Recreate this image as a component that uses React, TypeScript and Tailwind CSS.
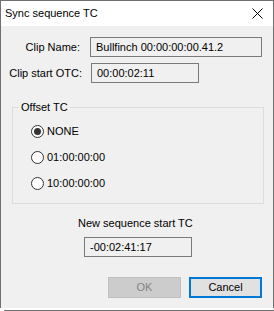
import React, { useState } from 'react';

const font = { fontFamily: '"Liberation Sans", Arial, sans-serif' };

const Radio: React.FC<{ label: string; checked: boolean; onClick: () => void }> = ({ label, checked, onClick }) => (
  <div className="h-[26px] flex items-center cursor-default" onClick={onClick}>
    <span className="w-[13px] h-[13px] rounded-full border border-[#333333] bg-white flex items-center justify-center">
      {checked && <span className="w-[7px] h-[7px] rounded-full bg-[#333333]"></span>}
    </span>
    <span className="ml-[3px] text-[11px] text-black">{label}</span>
  </div>
);

const App: React.FC = () => {
  const [offset, setOffset] = useState('NONE');
  const offsets = ['NONE', '01:00:00:00', '10:00:00:00'];

  return (
    <div className="w-[274px] h-[311px] bg-white flex flex-col" style={font}>
      <div className="h-[308px] border-l border-r border-t border-[#6f6f6f] flex flex-col">
        {/* title bar */}
        <div className="h-[25px] bg-white flex items-center justify-between">
          <span className="ml-[4px] text-[11px] text-black">Sync sequence TC</span>
          <svg width="11" height="11" viewBox="0 0 11 11" className="mr-[10px]">
            <path d="M0.5 0.5 L10.5 10.5 M10.5 0.5 L0.5 10.5" stroke="#000" strokeWidth="1" fill="none" />
          </svg>
        </div>

        {/* body */}
        <div className="flex-1 bg-[#f0f0f0] flex flex-col text-[11px] text-black">
          <div className="mt-[11px] flex items-center">
            <span className="w-[79px] text-right">Clip Name:</span>
            <div className="ml-[10px] w-[172px] h-[20px] border border-[#7a7a7a] flex items-center pl-[5px]">
              Bullfinch 00:00:00:00.41.2
            </div>
          </div>
          <div className="mt-[6px] flex items-center">
            <span className="w-[81px] text-right">Clip start OTC:</span>
            <div className="ml-[9px] w-[108px] h-[20px] border border-[#7a7a7a] flex items-center pl-[5px]">
              00:00:02:11
            </div>
          </div>

          {/* group */}
          <div className="relative mt-[24px] ml-[11px] w-[252px] h-[97px] border border-[#dcdcdc] pt-[10px] pl-[18px]">
            <span className="absolute -top-[8px] left-[6px] px-[2px] bg-[#f0f0f0] leading-[15px]">Offset TC</span>
            {offsets.map((o) => (
              <Radio key={o} label={o} checked={offset === o} onClick={() => setOffset(o)} />
            ))}
          </div>

          <div className="mt-[12px] ml-[77px] leading-[15px]">New sequence start TC</div>
          <div className="mt-[6px] ml-[83px] w-[108px] h-[20px] border border-[#7a7a7a] flex items-center pl-[5px]">
            -00:02:41:17
          </div>

          <div className="mt-[20px] flex justify-end gap-[8px] mr-[11px]">
            <button
              disabled
              className="w-[73px] h-[21px] bg-[#cccccc] border border-[#bfbfbf] text-[#838383] text-[11px]"
            >
              OK
            </button>
            <button className="w-[73px] h-[21px] bg-[#e1e1e1] border-2 border-[#0078d7] text-black text-[11px]">
              Cancel
            </button>
          </div>
        </div>
      </div>
      <div className="h-[3px] bg-white flex flex-col justify-end">
        <div className="ml-[4px] h-[1px] bg-[#6f6f6f]"></div>
      </div>
    </div>
  );
};

export default App;
